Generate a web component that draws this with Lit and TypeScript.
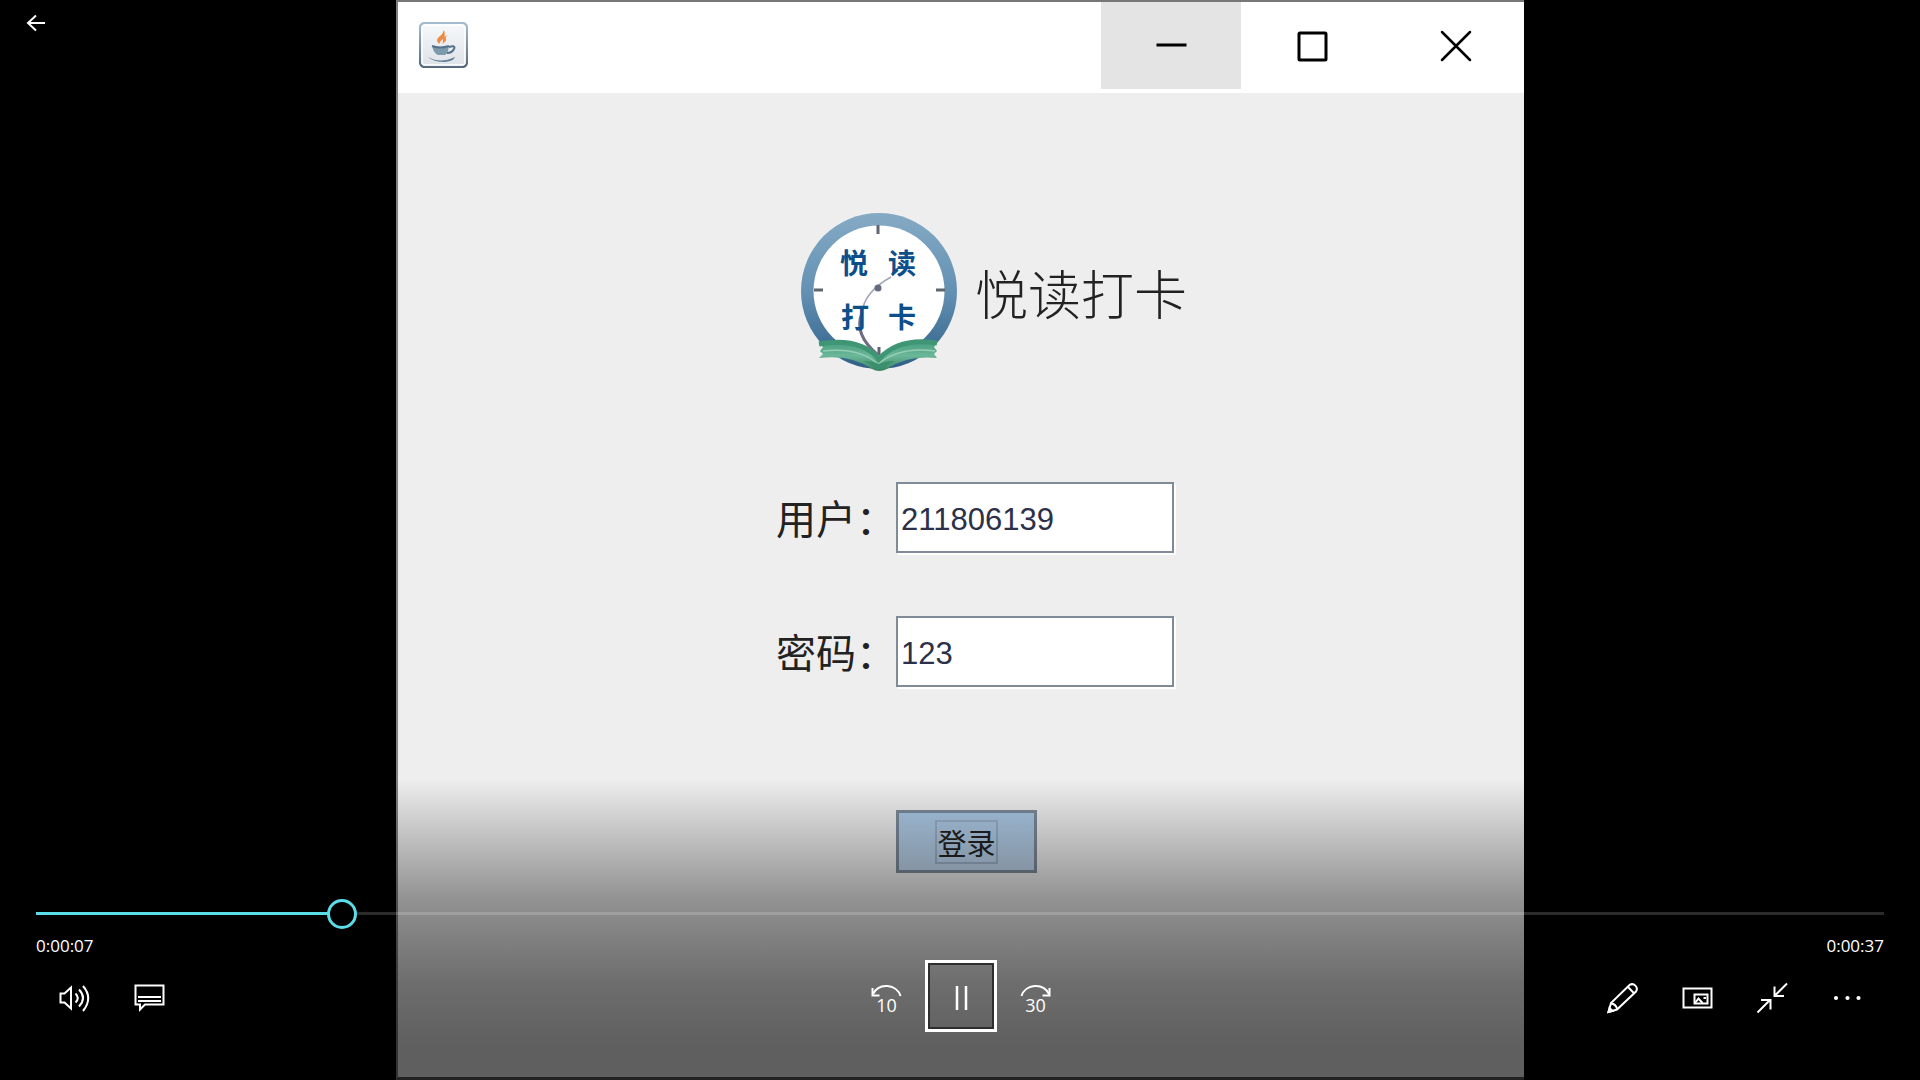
import { LitElement, html, css, svg } from "lit";
import { customElement, property, state } from "lit/decorators.js";

/* 75x72 cells: each drawing is centred on (37.5, 38) */
const ICONS: Record<string, unknown> = {
  volume: svg`<path d="M23.500 33.500h4l6.500-6v21l-6.500-6h-4z"/><path d="M38.500 33.500q4.500 4.500 0 9M42 29.500q8 8.500 0 17M46 26q10.500 12 0 25"/>`,
  captions: svg`<path d="M23.500 25.500h28v19h-18.500l-5 5v-5h-4.500z"/><path d="M26 37h23M26 41h23"/>`,
  back10: svg`<path d="M51.500 36C48 24 30 22 24 34"/><path d="M23.500 28v7.500h7"/><text x="37.500" y="51.500">10</text>`,
  forward30: svg`<path d="M23.500 36C27 24 45 22 51 34"/><path d="M51.500 28v7.500h-7"/><text x="37.500" y="51.500">30</text>`,
  pause: svg`<path d="M33 26v24M42 26v24" stroke-width="2.500"/>`,
  edit: svg`<path d="M23.500 52l2.500-9L44.500 25a4.700 4.700 0 0 1 6.500 6.500L32 49.500zM26 43.500q5 .5 6 5.500M43 27l5.800 6"/><path d="M23.500 52l1-4 3 3z" fill="#fff"/>`,
  mini: svg`<path d="M23.500 28.500h28v19h-28zM34.500 34.500h13v9h-13z"/><path d="M35 43l3.500-4.500 4 4.500M43.500 38h2.500" stroke-width="2"/>`,
  shrink: svg`<path d="M52 23.500L40 35.500M39.500 26.500v9.500h9.500M22.500 52.500L35 40M26 40h9.500v9.500"/>`,
  more: svg`<g fill="#fff" stroke="none"><circle cx="26" cy="38" r="2.100"/><circle cx="37.500" cy="38" r="2.100"/><circle cx="48.500" cy="38" r="2.100"/></g>`,
};

@customElement("player-button")
class PlayerButton extends LitElement {
  @property() icon = "";
  @property() label = "";
  @property({ type: Boolean }) active = false;

  static styles = css`
    :host { display: block; }
    .btn {
      display: grid;
      place-content: center;
      width: 75px;
      height: 72px;
      padding: 0;
      border: 0;
      background: none;
      color: #fff;
    }
    .btn.active {
      width: 72px;
      border: 3px solid #fff;
      box-shadow: inset 0 0 0 2px #2e2e2e;
    }
    svg {
      display: block;
      width: 75px;
      height: 72px;
      fill: none;
      stroke: currentColor;
      stroke-width: 2;
    }
    text {
      fill: currentColor;
      stroke: none;
      font: 18px "Open Sans", "Noto Sans", sans-serif;
      text-anchor: middle;
    }
  `;

  render() {
    return html`<button class="btn ${this.active ? "active" : ""}" type="button" aria-label=${this.label}>
      <svg viewBox="0 0 75 72" aria-hidden="true">${ICONS[this.icon]}</svg>
    </button>`;
  }
}

@customElement("login-window")
class LoginWindow extends LitElement {
  static styles = css`
    :host {
      display: flex;
      flex-direction: column;
      box-sizing: border-box;
      height: 100%;
      aspect-ratio: 47 / 45;
      border-top: 2px solid #777;
      border-left: 2px solid #808080;
      border-bottom: 3px solid #555;
      background: #eee;
      color: #222;
      font-family: "Liberation Sans", "Noto Sans CJK SC", sans-serif;
    }
    .titlebar {
      display: flex;
      justify-content: space-between;
      height: 91px;
      background: #fff;
    }
    .java { width: 49px; height: 46px; margin: 20px 21px; }
    .buttons { display: flex; gap: 2px; margin-right: -1px; }
    .win {
      width: 140px;
      height: 87px;
      padding: 0;
      border: 0;
      background: none;
    }
    .win.hover { background: #e4e4e4; }
    .win svg { display: block; width: 140px; height: 87px; fill: none; stroke: #000; stroke-width: 3; }
    .client { padding: 120px 0 0 378px; }
    .brand { display: flex; gap: 18px; padding-left: 25px; }
    .logo { width: 156px; height: 160px; }
    .logo text { font: 700 28px "Noto Sans CJK SC", sans-serif; fill: #0d4f8b; }
    h1 {
      margin: 0;
      font: 300 53px/158px "Noto Sans CJK SC", sans-serif;
      color: #222;
    }
    form {
      display: grid;
      grid-template-columns: 120px 278px;
      row-gap: 62px;
      padding-top: 109px;
    }
    label {
      font: 400 40px/70px "Noto Sans CJK SC", sans-serif;
      height: 72px;
      white-space: nowrap;
    }
    input {
      box-sizing: border-box;
      width: 278px;
      height: 71px;
      padding: 4px 3px 0;
      border: 2px solid #7f8b97;
      border-radius: 0;
      outline: 0;
      background: #fff;
      box-shadow: 2px 2px 0 #fff;
      color: #2c3048;
      font: 31px "Liberation Sans", sans-serif;
    }
    .login {
      grid-column: 2;
      width: 141px;
      height: 63px;
      margin-top: 60px;
      padding: 0;
      border: 3px solid #7b8a99;
      background: linear-gradient(#a9c8e4, #bdd3ea);
      color: #222;
      font: 29px/40px "Noto Sans CJK SC", sans-serif;
    }
    .focus { display: inline-block; border: 2px solid #9bb0c8; vertical-align: top; }
  `;

  render() {
    return html`
      <div class="titlebar">
        <svg class="java" viewBox="0 0 49 46" aria-hidden="true">
          <defs>
            <linearGradient id="jb" x2="0" y2="1"><stop stop-color="#a5bccf"/><stop offset="1" stop-color="#566b7d"/></linearGradient>
            <linearGradient id="jf" x2="0" y2="1"><stop stop-color="#f7f9fa"/><stop offset="1" stop-color="#dde2e8"/></linearGradient>
          </defs>
          <rect x="1" y="1" width="47" height="44" rx="5" fill="url(#jf)" stroke="url(#jb)" stroke-width="2.500"/>
          <rect x="3" y="3" width="43" height="40" rx="3" fill="none" stroke="#fff" stroke-width="1.500"/>
          <path d="M25 8q-1 4-5 7t0 7q1-3 4-5t1-9zM29 13q-5 2-5 5t-1 4q5-3 4-5t2-4z" fill="#ec8b45"/>
          <path d="M13 24q9 3 17 0-1 8-4 9h-7q-4-1-6-9z" fill="#7e9aad"/>
          <path d="M13 24q8 3 17 0M30 25q7-2 5 2-2 4-7 4" fill="none" stroke="#54728b" stroke-width="2"/>
          <path d="M9 35q12 7 27 0-1 4-10 5-12 0-17-5z" fill="#617d95"/>
        </svg>
        <div class="buttons">
          <button class="win hover" type="button" aria-label="最小化"><svg viewBox="0 0 140 87"><path d="M55.500 43h30"/></svg></button>
          <button class="win" type="button" aria-label="最大化"><svg viewBox="0 0 140 87"><rect x="56" y="31" width="27" height="27" rx="1"/></svg></button>
          <button class="win" type="button" aria-label="关闭"><svg viewBox="0 0 140 87"><path d="M57 30l28 28M85 30L57 58" stroke-width="2.500" stroke-linecap="round"/></svg></button>
        </div>
      </div>
      <div class="client">
        <div class="brand">
          <svg class="logo" viewBox="0 0 156 160" aria-hidden="true">
            <defs>
              <linearGradient id="ring" x2="0" y2="1"><stop stop-color="#85aac5"/><stop offset=".5" stop-color="#6491b3"/><stop offset="1" stop-color="#2f5f88"/></linearGradient>
              <linearGradient id="book" x2="0" y2="1"><stop stop-color="#449b7c"/><stop offset=".5" stop-color="#6bb799"/><stop offset="1" stop-color="#35805f"/></linearGradient>
            </defs>
            <circle cx="78" cy="78" r="78" fill="url(#ring)"/>
            <circle cx="78" cy="78" r="65.500" fill="#fff"/>
            <path d="M77 12v9M13 77h9M135 77h9M78 134v8" stroke="#5f6672" stroke-width="3"/>
            <path d="M90 64Q63 79 61 100" fill="none" stroke="#a2a5b8" stroke-width="1.500"/>
            <path d="M61 100q-9 21 16 42" fill="none" stroke="#6d6d83" stroke-width="3"/>
            <circle cx="77" cy="75" r="3.500" fill="#646b7c"/>
            <text x="39" y="61">悦</text><text x="87" y="61">读</text>
            <text x="40" y="115">打</text><text x="87" y="115">卡</text>
            <path d="M18 130Q59 123 78 144 98 123 136 129L133 134 136 138 133 141 136 145Q105 142 86 156 78 160 71 156 50 141 18 145L22 141 19 138 22 134z" fill="url(#book)"/>
            <path d="M22 138q36-4 55 13 22-18 57-13" fill="none" stroke="#96ceb5" stroke-width="1.500"/>
            <path d="M18 131q41-7 60 15 20-22 58-16" fill="none" stroke="#3f9675" stroke-width="5"/>
            <path d="M62 148q8 3 11 7 5 3 10 0 4-4 11-7-10 0-16 3-6-3-16-3z" fill="#3c8f6d"/>
          </svg>
          <h1>悦读打卡</h1>
        </div>
        <form @submit=${(e: Event) => e.preventDefault()}>
          <label for="user">用户：</label>
          <input id="user" type="text" value="211806139" />
          <label for="pass">密码：</label>
          <input id="pass" type="text" value="123" />
          <button class="login" type="submit"><span class="focus">登录</span></button>
        </form>
      </div>
    `;
  }
}

@customElement("app-root")
class AppRoot extends LitElement {
  @state() position = 160;

  static styles = css`
    :host {
      display: block;
      position: relative;
      height: 100vh;
      overflow: hidden;
      background: #000;
      color: #fff;
      font-family: "Open Sans", "Noto Sans", sans-serif;
    }
    .stage { display: flex; justify-content: center; height: 100%; }
    .back {
      position: absolute;
      left: 0;
      top: 0;
      width: 72px;
      height: 48px;
      padding: 0;
      border: 0;
      background: none;
    }
    .back svg { display: block; width: 72px; height: 48px; fill: none; stroke: #fff; stroke-width: 2; }
    .controls {
      position: absolute;
      left: 0;
      right: 0;
      bottom: 0;
      padding: 119px 36px 48px;
      background: linear-gradient(
        rgba(0, 0, 0, 0) 0%,
        rgba(0, 0, 0, 0.22) 22%,
        rgba(0, 0, 0, 0.38) 39%,
        rgba(0, 0, 0, 0.46) 52%,
        rgba(0, 0, 0, 0.54) 68%,
        rgba(0, 0, 0, 0.6) 88%,
        rgba(0, 0, 0, 0.6) 100%
      );
    }
    .seek {
      display: block;
      width: 100%;
      height: 30px;
      margin: 0;
      appearance: none;
      background: none;
    }
    .seek::-webkit-slider-runnable-track {
      height: 3px;
      background: linear-gradient(to right, #5bdce9 var(--played), rgba(255, 255, 255, 0.17) var(--played));
    }
    .seek::-webkit-slider-thumb {
      appearance: none;
      box-sizing: border-box;
      width: 30px;
      height: 30px;
      margin-top: -13px;
      border: 3px solid #5bdce9;
      border-radius: 50%;
      background: #000;
    }
    .times {
      display: flex;
      justify-content: space-between;
      padding: 6px 0 2px;
      font-size: 17px;
      line-height: 24px;
    }
    .bar { display: grid; grid-template-columns: 1fr auto 1fr; margin: 0 -1px 0 1px; }
    .group { display: flex; align-items: center; }
    .group.mid { gap: 1px; }
    .group.end { justify-content: flex-end; }
  `;

  private onSeek(e: Event) {
    this.position = Number((e.target as HTMLInputElement).value);
  }

  render() {
    return html`
      <div class="stage"><login-window></login-window></div>
      <button class="back" type="button" aria-label="返回">
        <svg viewBox="0 0 72 48" aria-hidden="true"><path d="M45 23H28M36 15.500L28 23l8 7.500"/></svg>
      </button>
      <div class="controls">
        <input class="seek" type="range" min="0" max="1000" aria-label="进度"
          style="--played:${this.position / 10}%" .value=${String(this.position)} @input=${this.onSeek} />
        <div class="times"><span>0:00:07</span><span>0:00:37</span></div>
        <div class="bar">
          <div class="group">
            <player-button icon="volume" label="音量"></player-button>
            <player-button icon="captions" label="字幕"></player-button>
          </div>
          <div class="group mid">
            <player-button icon="back10" label="后退 10 秒"></player-button>
            <player-button icon="pause" label="暂停" active></player-button>
            <player-button icon="forward30" label="前进 30 秒"></player-button>
          </div>
          <div class="group end">
            <player-button icon="edit" label="编辑"></player-button>
            <player-button icon="mini" label="迷你视图"></player-button>
            <player-button icon="shrink" label="退出全屏"></player-button>
            <player-button icon="more" label="更多"></player-button>
          </div>
        </div>
      </div>
    `;
  }
}
